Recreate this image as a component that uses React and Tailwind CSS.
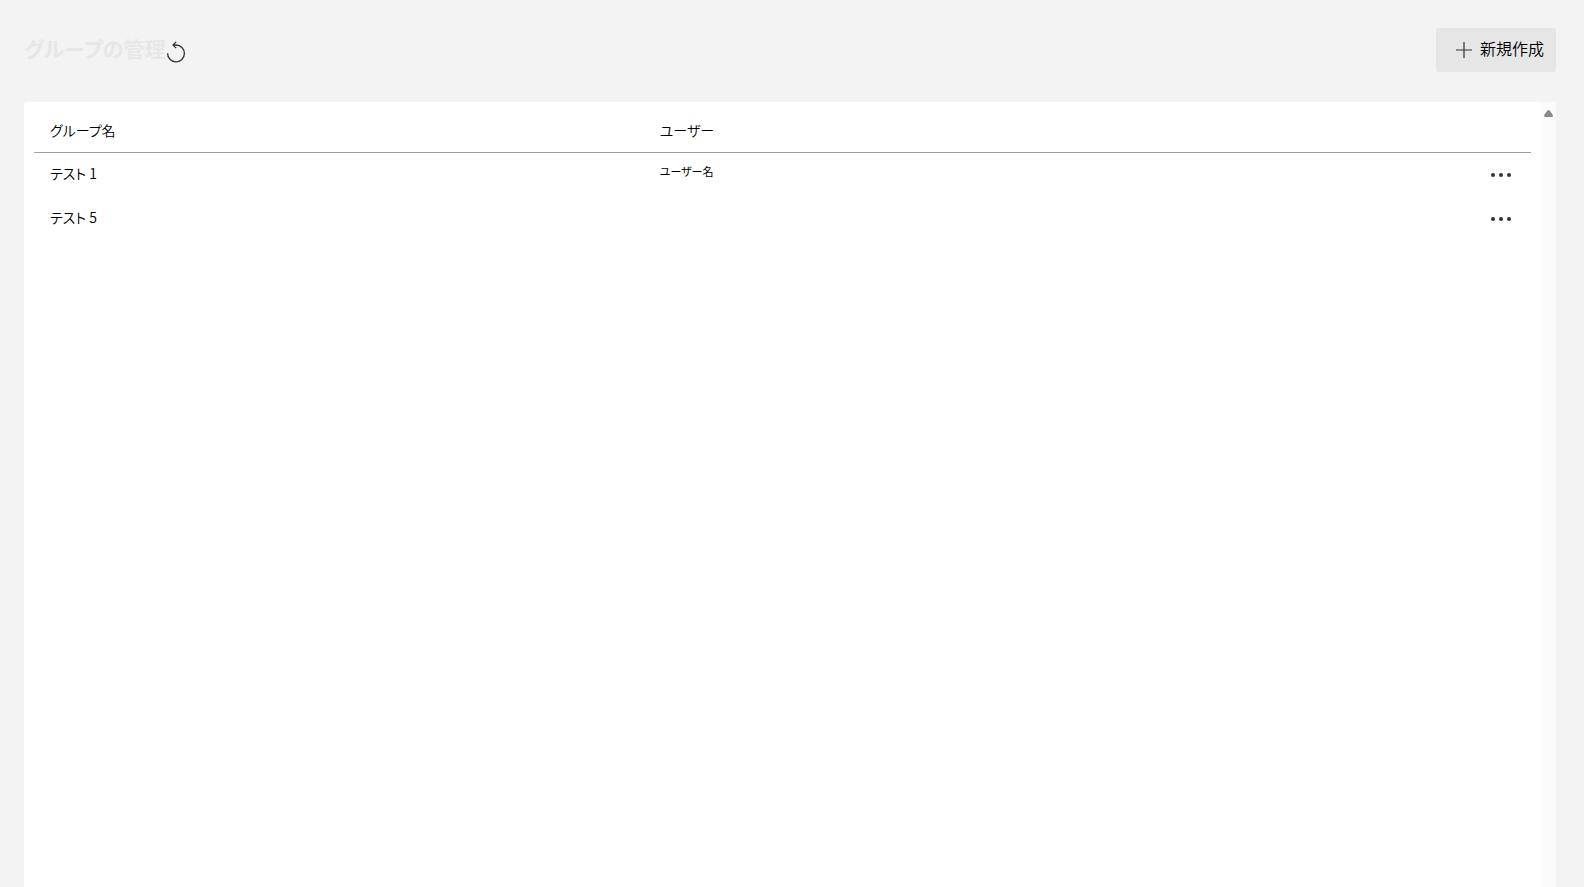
import React, { useState } from "react";

const initialGroups = [
  { id: 1, name: "テスト 1", users: ["ユーザー名"] },
  { id: 5, name: "テスト 5", users: [] },
];

function RefreshIcon() {
  return (
    <svg width="20" height="22" viewBox="0 0 20 22" fill="none" stroke="#333333" strokeWidth="1.3" aria-hidden="true">
      <path d="M1.6 12.2A8.4 8.4 0 1 0 10 4H7.2" />
      <path d="M10.2 0.9L7 4l3.2 3.1" />
    </svg>
  );
}

function PlusIcon() {
  return (
    <svg width="16" height="16" viewBox="0 0 16 16" stroke="#333333" strokeWidth="1.2" aria-hidden="true">
      <path d="M8 0v16M0 8h16" />
    </svg>
  );
}

function MoreIcon() {
  return (
    <svg width="20" height="4" viewBox="0 0 20 4" fill="#333333" aria-hidden="true">
      <circle cx="2" cy="2" r="2" />
      <circle cx="10" cy="2" r="2" />
      <circle cx="18" cy="2" r="2" />
    </svg>
  );
}

export default function App() {
  const [groups, setGroups] = useState(initialGroups);

  return (
    <div className="flex h-screen flex-col bg-[#f3f3f3] pt-7 pr-7 pl-6 font-['Noto_Sans_CJK_JP',sans-serif] text-sm font-[350] text-black [font-feature-settings:'palt']">
      <header className="flex items-center justify-between">
        <div className="flex items-center">
          <h1 className="pb-1 text-[21px] leading-9 font-bold text-[#e7e7e7]">グループの管理</h1>
          <button type="button" aria-label="更新" className="pt-1" onClick={() => setGroups(initialGroups)}>
            <RefreshIcon />
          </button>
        </div>
        <button type="button" className="flex h-11 items-center gap-2 rounded-[3px] bg-[#e6e6e6] pr-3 pl-5 text-base">
          <PlusIcon />
          <span className="pb-1">新規作成</span>
        </button>
      </header>

      <main className="mt-[30px] flex min-h-0 flex-1 rounded-tl-[3px] bg-white">
        <div className="min-w-0 flex-1 px-[10px]">
          <table className="w-full table-fixed border-collapse text-left">
            <thead>
              <tr className="h-[50px] border-b border-[#a0a0a0]">
                <th className="w-[41%] px-4 pt-1.5 font-[350]">グループ名</th>
                <th className="px-3 pt-1.5 font-[350]">ユーザー</th>
                <th className="w-20" aria-label="操作" />
              </tr>
            </thead>
            <tbody>
              {groups.map((group) => (
                <tr key={group.id} className="h-11">
                  <td className="px-4 pb-0.5">{group.name}</td>
                  <td className="px-3 pb-1 text-[11px] font-normal">{group.users.join("、")}</td>
                  <td className="pt-0.5 pr-5">
                    <button type="button" aria-label={`${group.name}のメニュー`} className="ml-auto flex h-8 items-center">
                      <MoreIcon />
                    </button>
                  </td>
                </tr>
              ))}
            </tbody>
          </table>
        </div>
        <div className="flex w-[15px] justify-center bg-[#fbfbfb] pt-2" aria-hidden="true">
          <svg width="9" height="7" viewBox="0 0 9 7" fill="#8a8a8a">
            <path d="M3.2 0.8Q4.5-0.8 5.8 0.8L8.7 4.8Q9.3 7 8 7H1Q-0.3 7 0.3 4.8Z" />
          </svg>
        </div>
      </main>
    </div>
  );
}
